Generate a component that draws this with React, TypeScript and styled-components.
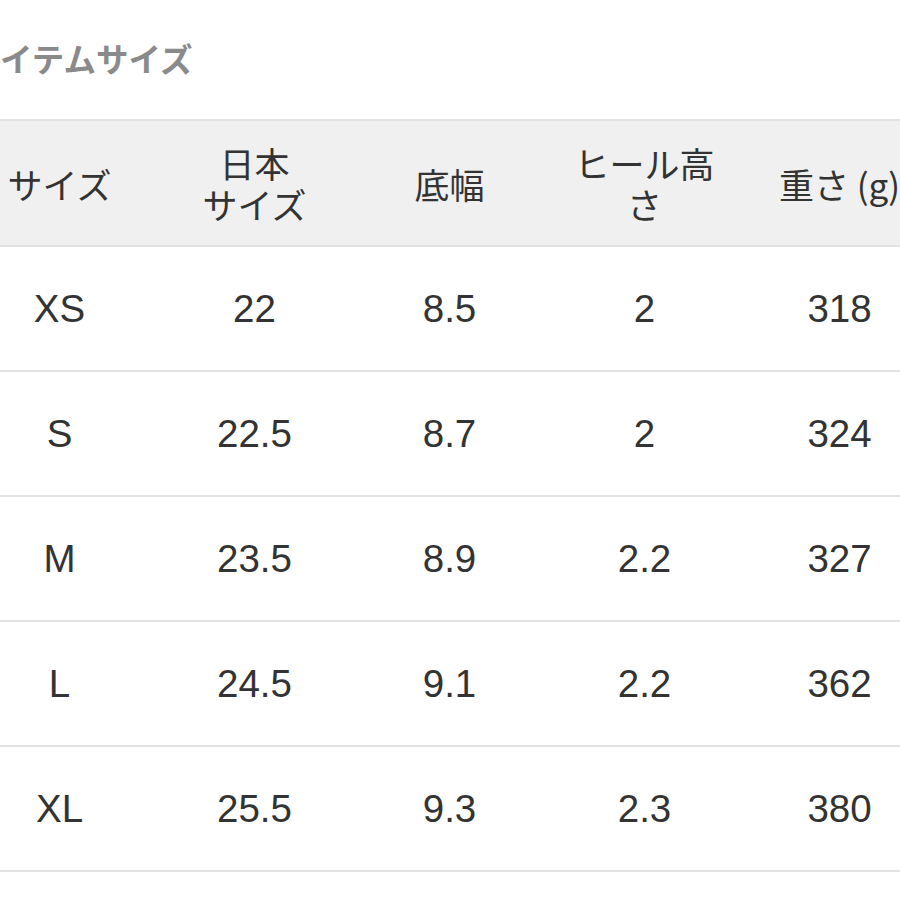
import React from "react";
import styled, { createGlobalStyle } from "styled-components";

const Global = createGlobalStyle`
  html, body { margin: 0; padding: 0; background: #ffffff; }
  body { font-family: "Liberation Sans", "Noto Sans CJK JP", sans-serif; overflow: hidden; }
`;

const Page = styled.div`
  width: 900px;
  height: 900px;
  overflow: hidden;
  background: #ffffff;
`;

const Title = styled.h2`
  margin: 0;
  padding: 38px 0 41px 0;
  height: 40px;
  line-height: 40px;
  font-family: "Noto Sans CJK JP", sans-serif;
  font-size: 32.5px;
  font-weight: 700;
  color: #8a8a8a;
`;

const Table = styled.table`
  margin-left: -38px;
  width: 975px;
  table-layout: fixed;
  border-collapse: collapse;
`;

const HeadCell = styled.th`
  height: 124px;
  padding: 0;
  background: #f0f0f0;
  border-top: 2px solid #e2e2e2;
  border-bottom: 2px solid #e2e2e2;
  font-family: "Noto Sans CJK JP", sans-serif;
  font-size: 35px;
  font-weight: 400;
  line-height: 41px;
  color: #333333;
  text-align: center;
  vertical-align: middle;
`;

const Cell = styled.td`
  height: 123px;
  padding: 0;
  border-bottom: 2px solid #e2e2e2;
  font-family: "Liberation Sans", "Noto Sans CJK JP", sans-serif;
  font-size: 38.5px;
  color: #333333;
  text-align: center;
  vertical-align: middle;
`;

const rows = [
  ["XS", "22", "8.5", "2", "318"],
  ["S", "22.5", "8.7", "2", "324"],
  ["M", "23.5", "8.9", "2.2", "327"],
  ["L", "24.5", "9.1", "2.2", "362"],
  ["XL", "25.5", "9.3", "2.3", "380"],
];

export default function App() {
  return (
    <Page>
      <Global />
      <Title>イテムサイズ</Title>
      <Table>
        <thead>
          <tr>
            <HeadCell>サイズ</HeadCell>
            <HeadCell>
              日本
              <br />
              サイズ
            </HeadCell>
            <HeadCell>底幅</HeadCell>
            <HeadCell>
              ヒール高
              <br />さ
            </HeadCell>
            <HeadCell>重さ (g)</HeadCell>
          </tr>
        </thead>
        <tbody>
          {rows.map((r) => (
            <tr key={r[0]}>
              {r.map((v, i) => (
                <Cell key={i}>{v}</Cell>
              ))}
            </tr>
          ))}
        </tbody>
      </Table>
    </Page>
  );
}
